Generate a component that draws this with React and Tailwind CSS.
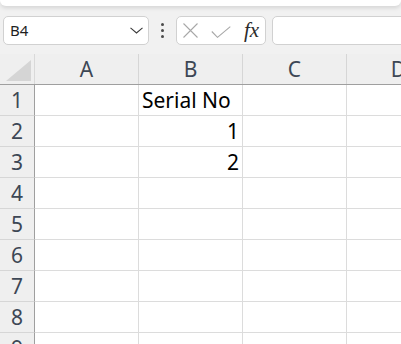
import React from 'react'

const cols = ['A', 'B', 'C', 'D']
const rows = [1, 2, 3, 4, 5, 6, 7, 8, 9]
const data = {
  1: { B: { v: 'Serial No', align: 'left' } },
  2: { B: { v: '1', align: 'right' } },
  3: { B: { v: '2', align: 'right' } },
}

const FormulaBar = () => {
  return (
    <div className="flex items-center h-[29px] mt-[10px] mb-[9px]">
      <div className="ml-[3px] w-[146px] shrink-0 h-[29px] flex items-center justify-between bg-white border border-[#d1d1d1] rounded-[5px] pl-[6px] pr-[5px]">
        <span className="text-[15px] text-[#1f1f1f]">B4</span>
        <svg width="13" height="7" viewBox="0 0 13 7" fill="none">
          <path d="M0.5 0.8 L6.5 6 L12.5 0.8" stroke="#3a3a3a" strokeWidth="1.1" />
        </svg>
      </div>
      <div className="w-[27px] shrink-0 h-[29px] flex flex-col items-center justify-center gap-[3px]">
        <span className="w-[3px] h-[3px] bg-[#4a4a4a] rounded-full" />
        <span className="w-[3px] h-[3px] bg-[#4a4a4a] rounded-full" />
        <span className="w-[3px] h-[3px] bg-[#4a4a4a] rounded-full" />
      </div>
      <div className="w-[90px] shrink-0 h-[29px] flex items-center bg-white border border-[#d1d1d1] rounded-[5px] pl-[5px]">
        <svg width="17" height="15" viewBox="0 0 17 15" fill="none" className="shrink-0">
          <path d="M1.5 0.5 L15.5 14.5 M15.5 0.5 L1.5 14.5" stroke="#a8a8a8" strokeWidth="1.1" />
        </svg>
        <svg width="20" height="12" viewBox="0 0 20 12" fill="none" className="ml-[12px] shrink-0 mt-[3px]">
          <path d="M0.8 5.5 L6.5 11.3 L19.3 0.6" stroke="#a8a8a8" strokeWidth="1.1" />
        </svg>
        <span
          className="ml-[13px] text-[21px] italic text-[#2b2b2b] leading-none"
          style={{ fontFamily: '"Liberation Serif", serif' }}
        >
          fx
        </span>
      </div>
      <div className="ml-[6px] w-[160px] shrink-0 h-[29px] bg-white border border-[#d1d1d1] rounded-[5px]" />
    </div>
  )
}

const App = () => {
  return (
    <div
      className="w-[401px] h-[344px] overflow-hidden bg-[#f1f1f1]"
      style={{ fontFamily: '"Noto Sans", sans-serif' }}
    >
      <div className="h-[6px] bg-white rounded-b-[6px] shadow-[0_2px_4px_rgba(0,0,0,0.12)]" />
      <FormulaBar />

      <div className="flex h-[31px] border-b border-[#9f9f9f]">
        <div className="w-[35px] shrink-0 border-r border-[#d9d9d9] bg-[#efefef] flex items-end justify-end p-[3px]">
          <svg width="25" height="21" viewBox="0 0 25 21">
            <polygon points="25,0 25,21 0,21" fill="#d5d5d5" />
          </svg>
        </div>
        {cols.map((c) => (
          <div
            key={c}
            className="w-[104px] shrink-0 border-r border-[#d6d6d6] bg-[#efefef] text-center text-[21px] leading-[30px] text-[#3d4755]"
          >
            {c}
          </div>
        ))}
      </div>

      {rows.map((r) => (
        <div key={r} className="flex h-[31px] bg-white">
          <div className="w-[35px] shrink-0 border-r border-b border-r-[#9f9f9f] border-b-[#d6d6d6] bg-[#efefef] text-center text-[21px] leading-[30px] text-[#3d4755]">
            {r}
          </div>
          {cols.map((c) => {
            const cell = data[r] && data[r][c]
            return (
              <div
                key={c}
                className={
                  'w-[104px] shrink-0 border-r border-b border-[#dcdcdc] text-[21px] leading-[30px] text-black px-[3px] ' +
                  (cell && cell.align === 'right' ? 'text-right' : 'text-left')
                }
              >
                {cell ? cell.v : ''}
              </div>
            )
          })}
        </div>
      ))}
    </div>
  )
}

export default App
